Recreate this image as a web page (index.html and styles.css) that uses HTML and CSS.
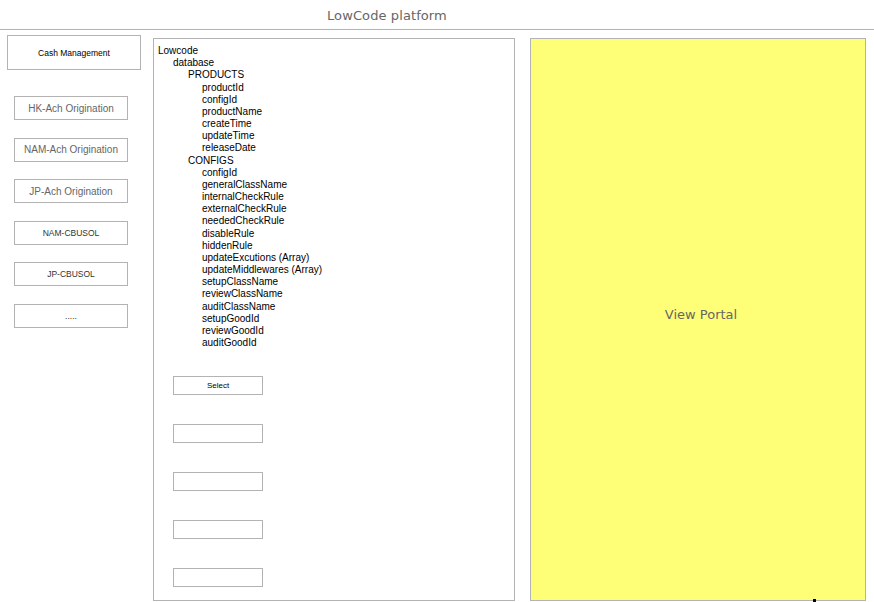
FILE: index.html
```html
<!DOCTYPE html>
<html>
<head>
<meta charset="utf-8">
<link rel="stylesheet" href="styles.css">
</head>
<body>
<header class="title-bar"><span class="title">LowCode platform</span></header>
<div class="frame">
  <aside class="side">
    <div class="cash">Cash Management</div>
    <ul class="menu">
      <li class="item big">HK-Ach Origination</li>
      <li class="item big">NAM-Ach Origination</li>
      <li class="item big">JP-Ach Origination</li>
      <li class="item small">NAM-CBUSOL</li>
      <li class="item small">JP-CBUSOL</li>
      <li class="item small">.....</li>
    </ul>
  </aside>
  <section class="tree-panel">
    <ul class="tree">
      <li>Lowcode</li>
      <li class="l1">database</li>
      <li class="l2">PRODUCTS</li>
      <li class="l3">productId</li>
      <li class="l3">configId</li>
      <li class="l3">productName</li>
      <li class="l3">createTime</li>
      <li class="l3">updateTime</li>
      <li class="l3">releaseDate</li>
      <li class="l2">CONFIGS</li>
      <li class="l3">configId</li>
      <li class="l3">generalClassName</li>
      <li class="l3">internalCheckRule</li>
      <li class="l3">externalCheckRule</li>
      <li class="l3">neededCheckRule</li>
      <li class="l3">disableRule</li>
      <li class="l3">hiddenRule</li>
      <li class="l3">updateExcutions (Array)</li>
      <li class="l3">updateMiddlewares (Array)</li>
      <li class="l3">setupClassName</li>
      <li class="l3">reviewClassName</li>
      <li class="l3">auditClassName</li>
      <li class="l3">setupGoodId</li>
      <li class="l3">reviewGoodId</li>
      <li class="l3">auditGoodId</li>
    </ul>
    <div class="fields">
      <div class="field">Select</div>
      <div class="field"></div>
      <div class="field"></div>
      <div class="field"></div>
      <div class="field"></div>
    </div>
  </section>
  <section class="portal">
    <span class="portal-label">View Portal</span>
    <span class="dot"></span>
  </section>
</div>
</body>
</html>
```
FILE: styles.css
```css
html, body {
  margin: 0;
  padding: 0;
  background: #ffffff;
  overflow: hidden;
}
body {
  width: 874px;
  height: 602px;
  font-family: "Liberation Sans", Arial, sans-serif;
}
.title-bar {
  height: 29px;
  display: flex;
  align-items: center;
  padding-left: 327px;
  box-sizing: border-box;
}
.title {
  font-family: "DejaVu Sans", sans-serif;
  font-size: 13px;
  color: #666666;
  letter-spacing: 0.1px;
  padding-top: 1px;
}
.frame {
  width: 872px;
  height: 600px;
  border-top: 1px solid #b3b3b3;
  border-right: 1px solid #b3b3b3;
  display: flex;
  align-items: flex-start;
  padding-left: 7px;
  box-sizing: content-box;
}
.side {
  width: 134px;
  margin-top: 5px;
  margin-right: 12px;
}
.cash {
  box-sizing: border-box;
  height: 35px;
  border: 1px solid #b3b3b3;
  display: flex;
  align-items: center;
  justify-content: center;
  font-size: 8.5px;
  color: #000;
}
.menu {
  list-style: none;
  margin: 26px 0 0 7px;
  padding: 0;
  display: grid;
  row-gap: 17.6px;
}
.item {
  box-sizing: border-box;
  width: 114px;
  height: 24px;
  border: 1px solid #b3b3b3;
  display: flex;
  align-items: center;
  justify-content: center;
}
.item.big {
  font-size: 10px;
  color: #666666;
}
.item.small {
  font-size: 8.5px;
  color: #333333;
}
.tree-panel {
  box-sizing: border-box;
  width: 362px;
  height: 563px;
  margin-top: 8px;
  margin-right: 15px;
  border: 1px solid #b3b3b3;
  padding: 6px 0 0 4px;
}
.tree {
  list-style: none;
  margin: 0;
  padding: 0;
  font-size: 10px;
  line-height: 12.17px;
  color: #000;
}
.tree .l1 { padding-left: 15px; }
.tree .l2 { padding-left: 30px; }
.tree .l3 { padding-left: 44px; }
.fields {
  margin-top: 27px;
  margin-left: 15px;
  display: grid;
  row-gap: 29px;
}
.field {
  box-sizing: border-box;
  width: 90px;
  height: 19px;
  border: 1px solid #b3b3b3;
  font-size: 8px;
  color: #000;
  display: flex;
  align-items: center;
  justify-content: center;
}
.portal {
  position: relative;
  box-sizing: border-box;
  width: 336px;
  height: 563px;
  margin-top: 8px;
  background: #ffff77;
  border: 1px solid #b3b3b3;
  display: flex;
  align-items: center;
  justify-content: center;
}
.portal-label {
  font-family: "DejaVu Sans", sans-serif;
  font-size: 13px;
  color: #666666;
  margin-bottom: 11px;
  margin-left: 6px;
}
.dot {
  position: absolute;
  left: 282px;
  bottom: -2px;
  width: 3px;
  height: 3px;
  background: #000;
}
```
